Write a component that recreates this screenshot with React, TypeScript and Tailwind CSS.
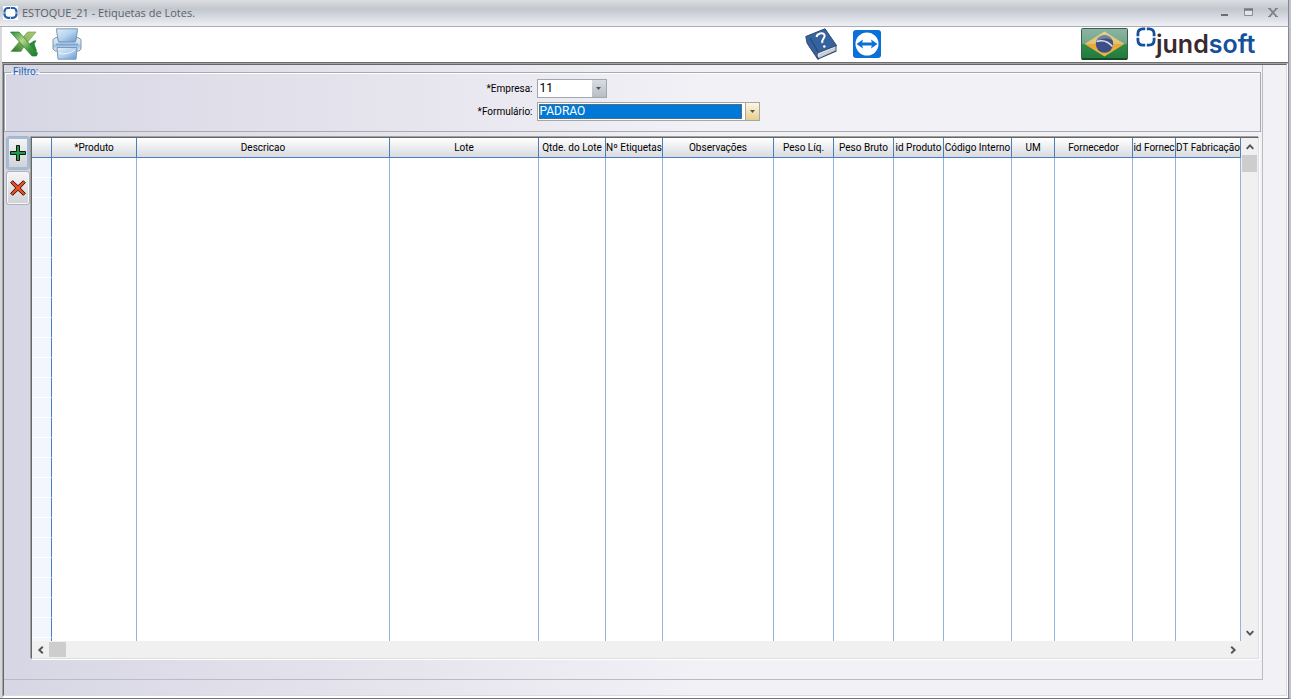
import { useState } from "react";
import type { ReactNode } from "react";

type Column = { title: string; width: string };

const columns: Column[] = [
  { title: "*Produto", width: "w-[85px]" },
  { title: "Descricao", width: "" },
  { title: "Lote", width: "w-[149px]" },
  { title: "Qtde. do Lote", width: "w-[67px]" },
  { title: "Nº Etiquetas", width: "w-[57px]" },
  { title: "Observações", width: "w-[111px]" },
  { title: "Peso Líq.", width: "w-[60px]" },
  { title: "Peso Bruto", width: "w-[60px]" },
  { title: "id Produto", width: "w-[50px]" },
  { title: "Código Interno", width: "w-[68px]" },
  { title: "UM", width: "w-[43px]" },
  { title: "Fornecedor", width: "w-[78px]" },
  { title: "id Fornec", width: "w-[43px]" },
  { title: "DT Fabricação", width: "w-[65px]" },
];

const rows = Array.from({ length: 60 }, (_, i) => i);

function Ring({ className }: { className: string }) {
  return (
    <svg viewBox="0 0 20 20" className={className} fill="none" stroke="#14509c" strokeWidth="2.8" aria-hidden="true">
      <path d="M9.2 1.9H7C3.400 1.900 1.900 3.400 1.900 7v2.200M10.800 1.900H13c3.600 0 5.100 1.500 5.100 5.100v2.200M9.200 18.100H7c-3.600 0-5.100-1.500-5.100-5.100v-2.200M10.800 18.100H13c3.600 0 5.100-1.500 5.100-5.100v-2.200" />
    </svg>
  );
}

function AppIcon() {
  return (
    <svg viewBox="0 0 15 14" className="h-3.5 w-[15px]" aria-hidden="true">
      <rect width="15" height="14" fill="#fff" />
      <rect x="1.5" y="2" width="12" height="9.800" rx="3.500" fill="none" stroke="#2260a8" strokeWidth="2.200" />
      <path d="M7.500 0v3.500M7.500 10.300V14M0 6.900h3M12 6.900h3" stroke="#cfdcee" strokeWidth=".9" />
    </svg>
  );
}

function ExcelIcon() {
  return (
    <svg viewBox="0 0 28 26" className="h-[26px] w-7" aria-hidden="true">
      <defs>
        <linearGradient id="xl" x1="0" y1="0" x2="1" y2="1">
          <stop offset="0" stopColor="#2c8a3b" />
          <stop offset=".4" stopColor="#b6d68a" />
          <stop offset=".7" stopColor="#3f9a3f" />
          <stop offset="1" stopColor="#1f7a33" />
        </linearGradient>
        <linearGradient id="xr" x1="1" y1="0" x2="0" y2="1">
          <stop offset="0" stopColor="#a9c97a" />
          <stop offset=".5" stopColor="#8db858" />
          <stop offset="1" stopColor="#1a742e" />
        </linearGradient>
      </defs>
      <path d="M1 20.500 17.500 1H26L14 15.500l-3 5z" fill="url(#xr)" stroke="#5c963a" strokeWidth=".6" />
      <path d="m16 15 8-5.500h2.500L24.500 13l2.500 7h-6z" fill="#2d8a3e" />
      <path d="M.5 1H9l18.500 21-1 3H22z" fill="url(#xl)" stroke="#2a7c38" strokeWidth=".7" />
    </svg>
  );
}

function PrinterIcon() {
  return (
    <svg viewBox="0 0 30 32" className="h-8 w-[30px]" aria-hidden="true">
      <defs>
        <linearGradient id="pa" x1="0" y1="0" x2="1" y2="1">
          <stop offset="0" stopColor="#e3effa" />
          <stop offset=".5" stopColor="#b4d2ee" />
          <stop offset="1" stopColor="#5f9bd3" />
        </linearGradient>
        <linearGradient id="pb" x1="0" y1="0" x2="0" y2="1">
          <stop offset="0" stopColor="#e6ecf3" />
          <stop offset=".45" stopColor="#c9dbee" />
          <stop offset=".6" stopColor="#9cc0e4" />
          <stop offset="1" stopColor="#e4ebf2" />
        </linearGradient>
      </defs>
      <path d="M1 11.500 4 9.500h1.500L7 14h16l1.500-4.500H26l3 2v9.500l-2 2H3l-2-2z" fill="url(#pb)" stroke="#8797aa" />
      <path d="M4.500.8h21l-.5 5-1.500 8h-17L5 5.800z" fill="url(#pa)" stroke="#7f98b4" />
      <path d="M4 16.500h22" stroke="#7aa9da" strokeWidth="2" />
      <path d="M5 19.500h20l-1 11.700H6z" fill="url(#pa)" stroke="#7f98b4" />
      <path d="M7 25c6 2 11 0 16-3" stroke="#eef6fd" fill="none" />
    </svg>
  );
}

function BookIcon() {
  return (
    <svg viewBox="0 0 32 32" className="size-8" aria-hidden="true">
      <path d="M.8 8.500 20 .8 31.500 17.500v6L13 31.500 3 17z" fill="#29486f" />
      <path d="M13 24.500 30.500 18v4.500L14 30c-2-1.500-2.300-4-1-5.500z" fill="#dfe3e8" />
      <path d="m14 27 16-6.500M14 29l16-7" stroke="#9ca8b7" strokeWidth=".6" />
      <path d="M.8 8.500 20 .8l11.500 16.700L13 24.800c-1.500 1.500-1.500 4 0 6.700L2 15z" fill="#35639f" stroke="#3a4f70" />
      <path d="m5 10 8 14" stroke="#284b7e" strokeWidth="1.500" />
      <path d="M11.500 9c.5-3.500 6.500-5 8-2 1.200 3.500-3.800 4-2 8" fill="none" stroke="#fff" strokeWidth="2" />
      <circle cx="19.300" cy="18.500" r="1.300" fill="#fff" />
    </svg>
  );
}

function RemoteIcon() {
  return (
    <svg viewBox="0 0 28 28" className="size-7" aria-hidden="true">
      <rect width="28" height="28" rx="3" fill="#0a6fd6" />
      <circle cx="14" cy="14" r="11.500" fill="#fff" />
      <path d="m3.500 14 6.500-4.500-.8 3h9.600l-.8-3 6.500 4.500-6.500 4.500.8-3H9.200l.8 3z" fill="#0a6fd6" />
    </svg>
  );
}

function FlagIcon() {
  return (
    <svg viewBox="0 0 47 32" className="h-8 w-[47px]" aria-hidden="true">
      <defs>
        <linearGradient id="fg" x1="0" y1="0" x2="0" y2="1">
          <stop offset="0" stopColor="#8db3a6" />
          <stop offset=".48" stopColor="#74a68c" />
          <stop offset=".52" stopColor="#2f8a4c" />
          <stop offset="1" stopColor="#1f7a3c" />
        </linearGradient>
        <linearGradient id="fy" x1="0" y1="0" x2="0" y2="1">
          <stop offset="0" stopColor="#e3d68e" />
          <stop offset=".5" stopColor="#e0c368" />
          <stop offset=".52" stopColor="#eaa63a" />
          <stop offset="1" stopColor="#e8b545" />
        </linearGradient>
      </defs>
      <rect x=".5" y=".5" width="46" height="31" rx="1" fill="url(#fg)" stroke="#37614a" />
      <path d="M1 31h45" stroke="#0d3f24" strokeWidth="1.500" />
      <path d="m3.500 16 20-12.500 20 12.500-20 12.500z" fill="url(#fy)" />
      <circle cx="23.500" cy="16" r="8.700" fill="#3d4f86" />
      <path d="M15.200 13.500A8.700 8.700 0 0 1 31.500 12.500c-5-3-11-2.500-16.300 1z" fill="#74829f" />
      <path d="M15.500 13.500c6-2 11.500-.5 16 5" fill="none" stroke="#dfe4e6" strokeWidth="1.500" />
    </svg>
  );
}

function PlusIcon() {
  return (
    <svg viewBox="0 0 16 16" className="size-4" aria-hidden="true">
      <path d="M6.500.5h3v6h6v3h-6v6h-3v-6h-6v-3h6z" fill="#27964a" stroke="#0d1a10" />
    </svg>
  );
}

function DeleteIcon() {
  return (
    <svg viewBox="0 0 16 16" className="size-4" aria-hidden="true">
      <path d="M.7 2.700 2.700.7 8 5.700 13.300.7l2 2L10.300 8l5 5.300-2 2L8 10.300l-5.300 5-2-2L5.700 8z" fill="#ef4b23" stroke="#33170f" />
    </svg>
  );
}

function Chevron({ turn }: { turn: string }) {
  return (
    <svg viewBox="0 0 8 8" className={`size-2 ${turn}`} fill="none" stroke="#505357" strokeWidth="1.900" aria-hidden="true">
      <path d="M.7 5.800 4 2.300l3.300 3.500" />
    </svg>
  );
}

function IconButton({ label, children }: { label: string; children: ReactNode }) {
  return (
    <button type="button" aria-label={label} className="flex items-center justify-center">
      {children}
    </button>
  );
}

function SideButton({ label, active, children }: { label: string; active?: boolean; children: ReactNode }) {
  return (
    <button
      type="button"
      aria-label={label}
      className={`flex h-8 w-[22px] items-center justify-center rounded-xs bg-linear-to-b from-[#f4f4f5] via-[#e3e3e5] to-[#d2d3d6] outline outline-[#b0b1b8] ${
        active ? "border-2 border-[#9cbfe0]" : "border border-[#f8f8fa]"
      }`}
    >
      {children}
    </button>
  );
}

function DropArrow({ tone }: { tone: string }) {
  return (
    <span className={`pointer-events-none flex w-[14px] shrink-0 items-center justify-center ${tone}`}>
      <svg viewBox="0 0 5 3" className="h-[3px] w-[5px]" aria-hidden="true">
        <path d="M0 0h5L2.500 3z" fill="#555" />
      </svg>
    </span>
  );
}

export default function App() {
  const [company, setCompany] = useState("11");
  const [form, setForm] = useState("PADRAO");

  return (
    <div className="flex h-screen flex-col border-r-2 border-b border-r-[#c0c3ce] border-b-[#6f7278] bg-[#f2f1f6] font-['Roboto','Liberation_Sans',sans-serif] text-[10px] text-black">
      <header className="flex h-[27px] shrink-0 items-center border-r border-b border-r-[#85888f] border-b-[#a9aeb5] bg-linear-to-b from-[#dcdde0] via-[#c2c7ce] via-35% to-[#eff0f5] pr-2.5 pl-[3px]">
        <AppIcon />
        <h1 className="ml-1 font-['Open_Sans',sans-serif] text-[11px] text-[#5d6167]">ESTOQUE_21 - Etiquetas de Lotes.</h1>
        <div className="ml-auto flex items-center gap-[15px] pb-0.5">
          <button type="button" aria-label="Minimizar">
            <svg viewBox="0 0 8 10" className="h-2.5 w-2" aria-hidden="true">
              <path d="M0 8h7" stroke="#6d6d6d" strokeWidth="2" />
            </svg>
          </button>
          <button type="button" aria-label="Maximizar">
            <svg viewBox="0 0 9 8" className="h-2 w-[9px]" aria-hidden="true">
              <path d="M.5 1v6.500h8V1" fill="#e4e5e8" stroke="#8b8d90" />
              <path d="M0 1.500h9" stroke="#77797c" strokeWidth="2.500" />
            </svg>
          </button>
          <button type="button" aria-label="Fechar">
            <svg viewBox="0 0 10 9" className="h-[9px] w-2.5" aria-hidden="true">
              <path d="m1.500.5 7 8M8.500.5l-7 8" stroke="#808285" strokeWidth="1.800" />
              <path d="M0 .5h3M7 .5h3M0 8.500h3M7 8.500h3" stroke="#808285" />
            </svg>
          </button>
        </div>
      </header>

      <div className="flex min-h-0 flex-1 flex-col border-r border-l-2 border-r-[#85888f] border-l-[#d8d8dc]">
        <nav aria-label="Ferramentas" className="flex h-9 shrink-0 items-center border-b border-[#6b6b6b] bg-white pr-[31px] pb-px pl-2">
          <div className="flex items-center gap-3.5">
            <IconButton label="Exportar para Excel">
              <ExcelIcon />
            </IconButton>
            <IconButton label="Imprimir">
              <PrinterIcon />
            </IconButton>
          </div>
          <div className="mr-[200px] ml-auto flex items-center gap-4">
            <IconButton label="Ajuda">
              <BookIcon />
            </IconButton>
            <IconButton label="Suporte remoto">
              <RemoteIcon />
            </IconButton>
          </div>
          <IconButton label="Idioma">
            <FlagIcon />
          </IconButton>
          <div className="ml-2 flex w-[121px] items-start">
            <Ring className="mt-px size-5 shrink-0" />
            <span className="font-['Inter',sans-serif] text-[25px] leading-9 font-semibold text-[#3a2a30]">
              jund<span className="text-[#14509c]">soft</span>
            </span>
          </div>
        </nav>

        <div className="flex min-h-0 flex-1 flex-col border-t border-r border-b-2 border-l border-t-[#a3a3a3] border-r-white border-b-white border-l-[#a3a3a3]">
          <div className="flex min-h-0 flex-1 flex-col border border-t-[#666] border-r-[#dcdce0] border-b-[#dcdce0] border-l-[#666] bg-linear-to-r from-[#d7d6e4] to-[#f2f1f6] to-55% pr-[23px] pb-[15px]">
            <main className="flex min-h-0 flex-1 flex-col border-r border-b border-[#bcbcc0]">
              <fieldset className="mr-px shrink-0 border border-[#a4abb2] pb-2.5 shadow-[inset_1px_1px_0_#fff]">
                <legend className="ml-1.5 px-0.5 text-[10px] leading-[14px] text-[#1766b8]">Filtro:</legend>
                <div className="mx-auto grid w-[302px] grid-cols-[51px_223px] gap-1">
                  <label htmlFor="empresa" className="justify-self-end leading-[19px] whitespace-nowrap">
                    *Empresa:
                  </label>
                  <div className="flex h-[19px] w-[70px] border border-[#a0a7b0] bg-white">
                    <select
                      id="empresa"
                      value={company}
                      onChange={(e) => setCompany(e.target.value)}
                      className="min-w-0 flex-1 appearance-none pl-0.5 font-['Roboto'] text-xs leading-[17px] outline-none"
                    >
                      <option>11</option>
                    </select>
                    <DropArrow tone="bg-linear-to-b from-[#d9dce0] to-[#b9bec5]" />
                  </div>
                  <label htmlFor="formulario" className="justify-self-end leading-[19px] whitespace-nowrap">
                    *Formulário:
                  </label>
                  <div className="flex h-[19px] border border-[#a0a7b0] bg-white">
                    <select
                      id="formulario"
                      value={form}
                      onChange={(e) => setForm(e.target.value)}
                      className="my-px mr-[3px] ml-px min-w-0 flex-1 appearance-none border border-dotted border-[#a0662c] bg-[#0078d7] font-['Roboto'] text-xs leading-[13px] text-white outline-none"
                    >
                      <option>PADRAO</option>
                    </select>
                    <DropArrow tone="border-l border-[#a0a7b0] bg-linear-to-b from-[#fdf6e3] to-[#e6cf8a]" />
                  </div>
                </div>
              </fieldset>

              <div className="flex min-h-0 flex-1 pt-[5px] pr-[3px] pb-5 pl-[3px]">
                <div className="flex w-6 shrink-0 flex-col gap-[3px]">
                  <SideButton label="Adicionar" active>
                    <PlusIcon />
                  </SideButton>
                  <SideButton label="Excluir">
                    <DeleteIcon />
                  </SideButton>
                </div>

                <section
                  aria-label="Lotes"
                  className="flex min-w-0 flex-1 flex-col border border-t-[#666664] border-r-[#dedede] border-b-[#dedede] border-l-[#666664] bg-white shadow-[-1px_-1px_0_#a0a0a0,1px_1px_0_#fff]"
                >
                  <div className="flex min-h-0 flex-1">
                    <div className="min-w-0 flex-1 overflow-hidden">
                      <table className="w-full table-fixed border-separate border-spacing-0">
                        <thead>
                          <tr className="h-5">
                            <th className="w-5 border-r border-b border-[#4a7fbd] bg-linear-to-b from-white to-[#d9dbe0] p-0" />
                            {columns.map((column) => (
                              <th
                                key={column.title}
                                scope="col"
                                className={`overflow-hidden border-r border-b border-[#4a7fbd] bg-linear-to-b from-white to-[#d9dbe0] p-0 pt-px text-center leading-[18px] font-normal whitespace-nowrap ${column.width}`}
                              >
                                {column.title}
                              </th>
                            ))}
                          </tr>
                        </thead>
                        <tbody>
                          {rows.map((row) => (
                            <tr key={row} className="h-5">
                              <td className="border-r border-b border-r-[#4a7fbd] border-b-white bg-[#f3f7fd] p-0" />
                              {columns.map((column) => (
                                <td key={column.title} className="border-r border-[#94b3dc] p-0" />
                              ))}
                            </tr>
                          ))}
                        </tbody>
                      </table>
                    </div>
                    <div className="flex w-[17px] shrink-0 flex-col items-center bg-[#f0f0f0]">
                      <button type="button" aria-label="Rolar para cima" className="flex h-[17px] w-full items-center justify-center">
                        <Chevron turn="" />
                      </button>
                      <div className="h-[17px] w-[15px] bg-[#cdcdcd]" />
                      <button type="button" aria-label="Rolar para baixo" className="mt-auto flex h-[17px] w-full items-center justify-center">
                        <Chevron turn="rotate-180" />
                      </button>
                    </div>
                  </div>
                  <div className="flex h-[17px] shrink-0 items-center bg-[#f0f0f0] pr-[17px]">
                    <button type="button" aria-label="Rolar para a esquerda" className="flex size-[17px] items-center justify-center">
                      <Chevron turn="-rotate-90" />
                    </button>
                    <div className="h-[15px] w-[17px] bg-[#cdcdcd]" />
                    <button type="button" aria-label="Rolar para a direita" className="ml-auto flex size-[17px] items-center justify-center">
                      <Chevron turn="rotate-90" />
                    </button>
                  </div>
                </section>
              </div>
            </main>
          </div>
        </div>
      </div>
    </div>
  );
}
